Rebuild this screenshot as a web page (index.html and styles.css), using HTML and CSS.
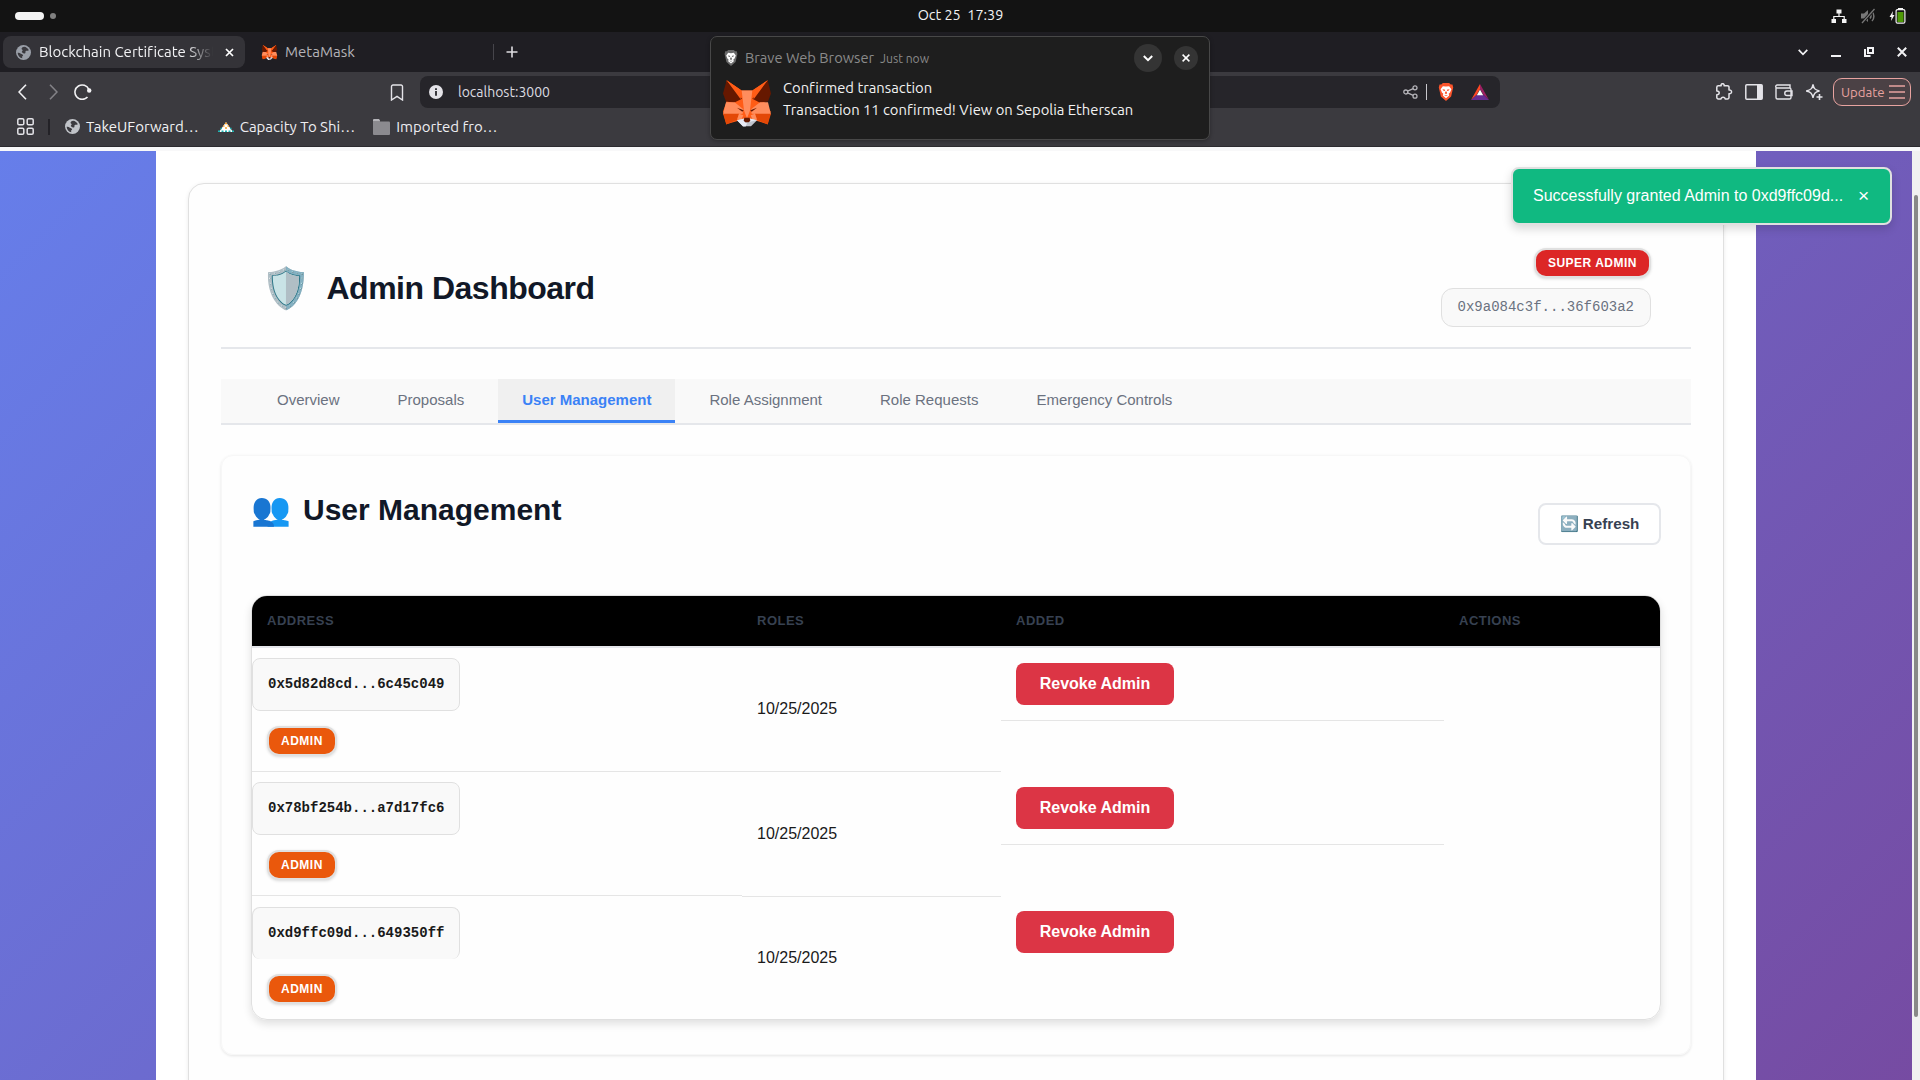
FILE: index.html
```html
<!DOCTYPE html>
<html lang="en">
<head>
<meta charset="utf-8">
<title>Blockchain Certificate System</title>
<link rel="stylesheet" href="styles.css">
</head>
<body>
<svg class="sprite" aria-hidden="true">
  <symbol id="fox" viewBox="69 150 144 140">
    <path fill="#ff5c16" d="M80 150l45 31h32l46-31-10 66 19 28-9 38-34-10-28 12-26-12-36 10-10-38 10-28z"/>
    <path fill="#661800" d="M80 150l46 56-24 12-24-4-9-24zM203 150l10 40-9 24-24 4-23-12z"/>
    <path fill="#ff5c16" d="M80 150l45 31-3 26zM203 150l-46 31 4 26z"/>
    <path fill="#ff8d5d" d="M125 181h32l-7 60-9 23-9-23zM78 216h26l26 21-2 14-59 2zM204 216h-24l-27 21 2 14 58 2z"/>
    <path fill="#e34807" d="M69 251h48l-6 18-32 14zM213 251h-48l6 18 32 14z"/>
    <path fill="#ff8d5d" d="M117 251l13 4-6 14-13 0zM165 251l-13 4 6 14h13z"/>
    <path fill="#661800" d="M111 233l20 7-4 5zM171 233l-20 7 4 5z"/>
    <path fill="#c0c4cd" d="M111 270l20-5h20l20 5-18 18h-24z"/>
    <path fill="#e7ebf6" d="M111 270l20-4 2 9 8 5-4 9h-8zM171 270l-20-4-2 9z"/>
    <path fill="#661800" d="M133 263h16l2 9-5 4h-10l-5-4z"/>
  </symbol>
  <symbol id="globe" viewBox="0 0 14 14">
    <circle cx="7" cy="7" r="7" fill="currentColor"/>
    <path class="land" d="M7.5 1.6c2 .2 3.800 1.500 4.500 3.300-1.300.8-2.200.2-3 .9-.7.700.3 1.200-.4 1.800-.9.7-2.300-.1-3-.9C5 6 6.300 5.600 6.200 4.800c-.1-.6-1.200-.6-1-1.500.2-.9 1.300-1.600 2.300-1.700zM1.500 7.200c1.300-.2 2.300.2 3 .9.6.6 1.900.5 2.100 1.300.2.900-.9 1-.9 1.700 0 .5.300.8.200 1.300C3.500 12 1.700 9.700 1.500 7.200z"/>
  </symbol>
  <symbol id="lion" viewBox="0 0 16 20">
    <path fill="currentColor" d="M4.500 0h7l1.700 1.700 2-.1L16 5l-2.300 10-5.700 5-5.700-5L0 5l.8-3.400 2 .1z"/>
    <path class="mane" fill-rule="evenodd" d="M4.500 3.500L8 4l3.500-.5L14 7l-1.500 3.500L11 12l.5 2L8 17l-3.500-3 .5-2-1.500-1.500L2 7zM4 7l1.200 1.500L7 8.800 6.600 7.300zM12 7l-2.600.3L9 8.800l1.800-.3zM7.300 9.500l-.6 2L8 12.600l1.300-1.100-.6-2zM5.800 13.200L8 14.800l2.200-1.600L8 13.600z"/>
  </symbol>
</svg>

<div class="desktop">
  <header class="panel">
    <div class="workspaces"><span class="ws-active"></span><span class="ws-dot"></span></div>
    <div class="clock">Oct 25&nbsp; 17:39</div>
    <div class="tray">
      <svg width="16" height="16" viewBox="0 0 16 16"><path fill="#f4f4f4" d="M5.500 1.500h5v4h-5zM.5 11h4.500v4H.5zM11 11h4.500v4H11z"/><path d="M8 5v3M2.800 11V8.500h10.400V11" fill="none" stroke="#f4f4f4" stroke-width="1.200"/></svg>
      <svg width="16" height="16" viewBox="0 0 16 16"><path fill="#777" d="M1 5.500h3L8 2v12l-4-3.500H1z"/><path d="M10 5.500c1.200 1.500 1.200 3.500 0 5M12 3.500c2.500 2.500 2.500 7 0 9.500" fill="none" stroke="#777" stroke-width="1.500"/><path d="M14.500 1L2 15" stroke="#131313" stroke-width="3"/><path d="M14.500 1L2 15" stroke="#777" stroke-width="1.300"/></svg>
      <svg width="17" height="16" viewBox="0 0 17 16"><path fill="#f4f4f4" d="M4 3L.5 9h2L2 13l3.500-6h-2z"/><path fill="#f4f4f4" d="M9 0h5v2H9z"/><rect x="7.100" y="1.600" width="8.800" height="13.600" rx="1.500" fill="none" stroke="#f4f4f4" stroke-width="1.200"/><path fill="#4e9a06" d="M8.500 4h6v10h-6z"/></svg>
    </div>
  </header>

  <div class="tabstrip">
    <div class="tab tab-active">
      <svg class="favicon" width="15" height="15"><use href="#globe"/></svg>
      <span class="tab-title">Blockchain Certificate Syst</span>
      <svg width="9" height="9" viewBox="0 0 9 9"><path d="M1 1l7 7M8 1L1 8" stroke="#fff" stroke-width="1.700"/></svg>
    </div>
    <div class="tab">
      <svg width="17" height="15"><use href="#fox"/></svg>
      <span class="tab-name">MetaMask</span>
    </div>
    <span class="tab-sep"></span>
    <svg class="newtab" width="12" height="12" viewBox="0 0 12 12"><path d="M6 .5v11M.5 6h11" stroke="#dedde1" stroke-width="1.600"/></svg>
    <div class="window-controls">
      <svg width="10" height="7" viewBox="0 0 10 7"><path d="M.7.9L5 5.300 9.300.9" fill="none" stroke="#f2f2f4" stroke-width="1.700"/></svg>
      <svg width="10" height="10" viewBox="0 0 10 10"><path d="M0 9h10" stroke="#f2f2f4" stroke-width="2"/></svg>
      <svg width="10" height="10" viewBox="0 0 10 10"><path d="M1 2v7h5.500M4 1h5v5H4z" fill="none" stroke="#f2f2f4" stroke-width="2"/></svg>
      <svg width="10" height="10" viewBox="0 0 10 10"><path d="M.8.8l8.400 8.400M9.200.8L.8 9.200" stroke="#f2f2f4" stroke-width="2"/></svg>
    </div>
  </div>

  <div class="toolbar">
    <div class="nav">
      <svg width="9" height="16" viewBox="0 0 9 16"><path d="M8 .8L1 8l7 7.200" fill="none" stroke="#f2f2f4" stroke-width="1.600"/></svg>
      <svg width="9" height="16" viewBox="0 0 9 16"><path d="M1 .8L8 8l-7 7.200" fill="none" stroke="#838287" stroke-width="1.600"/></svg>
      <svg width="18" height="16" viewBox="0 0 18 16"><path d="M13.500 13A7.200 7.200 0 1 1 14.800 5.400" fill="none" stroke="#f2f2f4" stroke-width="1.600"/><circle cx="15.200" cy="6.500" r="2.200" fill="#f2f2f4"/></svg>
    </div>
    <svg class="bookmark" width="14" height="17" viewBox="0 0 14 17"><path d="M1.500 2.500A1.500 1.500 0 0 1 3 1h8a1.500 1.500 0 0 1 1.500 1.500V16L7 12.300 1.500 16z" fill="none" stroke="#e4e3e8" stroke-width="1.400"/></svg>
    <div class="urlbar">
      <svg width="14" height="14" viewBox="0 0 14 14"><circle cx="7" cy="7" r="7" fill="#e4e3e8"/><path d="M6.100 6h1.800v4.800H6.100zM6.100 3.200h1.800v1.700H6.100z" fill="#26252a"/></svg>
      <span class="url">localhost:3000</span>
      <svg width="15" height="14" viewBox="0 0 15 14"><g fill="none" stroke="#b4b3b8" stroke-width="1.300"><circle cx="2.800" cy="7" r="2"/><circle cx="12" cy="2.800" r="2"/><circle cx="12" cy="11.200" r="2"/><path d="M4.600 6.200l5.600-2.600M4.600 7.800l5.600 2.600"/></g></svg>
      <span class="url-sep"></span>
      <svg class="brave" width="16" height="18"><use href="#lion"/></svg>
      <svg width="18" height="16" viewBox="0 0 18 16"><path fill="#ff4724" d="M9 0v5L5.500 11 0 16z"/><path fill="#9e1f63" d="M9 0l9 16-5.500-5L9 5z"/><path fill="#662d91" d="M0 16l5.500-5h7L18 16z"/><path fill="#fff" d="M9 5.500l3.200 5.700H5.800z"/></svg>
    </div>
    <div class="extensions">
      <svg width="18" height="18" viewBox="0 0 18 18"><path d="M3.300 2.700h2.900c-.9-2.700 3.600-2.700 2.900 0h3.400a1.500 1.500 0 0 1 1.500 1.500v2.900c3.400-.5 3.400 4.100 0 3.600v3.800a1.500 1.500 0 0 1-1.500 1.500h-2.300c-.2-2.500-4-2.500-4.200 0H3.300a1.500 1.500 0 0 1-1.500-1.500v-2.700c3.200 0 3.200-3.900 0-3.900V4.200a1.500 1.500 0 0 1 1.500-1.500z" fill="none" stroke="#e4e3e8" stroke-width="1.500" stroke-linejoin="round"/></svg>
      <svg width="18" height="16" viewBox="0 0 18 16"><rect x=".8" y=".8" width="16.400" height="14.400" rx="1" fill="none" stroke="#e4e3e8" stroke-width="1.500"/><path fill="#e4e3e8" d="M12 1h5v14h-5z"/></svg>
      <svg width="18" height="16" viewBox="0 0 18 16"><path d="M1 3v10.500A1.500 1.500 0 0 0 2.500 15h12a1.500 1.500 0 0 0 1.500-1.500v-8A1.500 1.500 0 0 0 14.500 4H2.200a1.200 1.200 0 0 1 0-3H15v3M17 7h-5a2 2 0 0 0 0 4.500h5z" fill="none" stroke="#e4e3e8" stroke-width="1.400"/></svg>
      <svg width="18" height="18" viewBox="0 0 18 18"><path d="M8 1.500c.8 4 2 5.500 6.500 6.500C10 9 8.800 10.500 8 15 7.200 10.500 6 9 1.200 8 6 7 7.200 5.500 8 1.500z" fill="none" stroke="#e4e3e8" stroke-width="1.400"/><path d="M14.500 11v6M11.500 14h6" stroke="#e4e3e8" stroke-width="1.600"/></svg>
    </div>
    <div class="update">Update
      <svg width="16" height="14" viewBox="0 0 16 14"><path d="M0 1h16M0 7h16M0 13h16" stroke="#e8a3a0" stroke-width="1.500"/></svg>
    </div>
  </div>

  <div class="bookmarks">
    <svg class="apps" width="17" height="17" viewBox="0 0 17 17"><g fill="none" stroke="#e4e3e8" stroke-width="1.500"><rect x=".8" y=".8" width="6" height="6" rx="1.300"/><rect x="10.200" y=".8" width="6" height="6" rx="1.300"/><rect x=".8" y="10.200" width="6" height="6" rx="1.300"/><rect x="10.200" y="10.200" width="6" height="6" rx="1.300"/></g></svg>
    <span class="bm-sep"></span>
    <div class="bm bm-globe"><svg width="15" height="15"><use href="#globe"/></svg>TakeUForward…</div>
    <div class="bm"><svg width="16" height="10" viewBox="0 0 16 10"><path fill="#fff" d="M8 0l7 10H1z"/><path d="M7 1.500h2M5 4h1.500M9.500 4H11M7 6h2" stroke="#f5a02a" stroke-width="1.600"/><path d="M0 9.200h2M3.500 9.200h2M7 9.200h2M10.500 9.200h2M14 9.200h2M2.500 6.500h1.500M12 6.500h1.500" stroke="#1fb5b5" stroke-width="1.500"/></svg>Capacity To Shi…</div>
    <div class="bm"><svg width="17" height="16" viewBox="0 0 17 16"><path fill="#8b8a8f" d="M0 2.500h16a1 1 0 0 1 1 1V15a1 1 0 0 1-1 1H1a1 1 0 0 1-1-1z"/><path fill="#b5b4b9" d="M0 1a1 1 0 0 1 1-1h5l1 1.500v1H0z"/></svg>Imported fro…</div>
  </div>

  <main class="viewport">
    <div class="page">
      <section class="dashboard">
        <header class="dash-header">
          <h1><span class="shield">🛡️</span>Admin Dashboard</h1>
          <div class="identity">
            <span class="badge badge-super">SUPER ADMIN</span>
            <span class="wallet">0x9a084c3f...36f603a2</span>
          </div>
        </header>
        <nav class="dash-tabs">
          <button>Overview</button>
          <button>Proposals</button>
          <button class="active">User Management</button>
          <button>Role Assignment</button>
          <button>Role Requests</button>
          <button>Emergency Controls</button>
        </nav>
        <section class="users">
          <div class="users-head">
            <h2><span class="people">👥</span>User Management</h2>
            <button class="refresh">🔄 Refresh</button>
          </div>
          <div class="table">
            <div class="row head"><span>ADDRESS</span><span>ROLES</span><span>ADDED</span><span>ACTIONS</span></div>
            <div class="row">
              <div class="cell who"><code>0x5d82d8cd...6c45c049</code><span class="badge">ADMIN</span></div>
              <div class="cell date">10/25/2025</div>
              <div class="cell act"><button class="revoke">Revoke Admin</button></div>
            </div>
            <div class="row second">
              <div class="cell who"><code>0x78bf254b...a7d17fc6</code><span class="badge">ADMIN</span></div>
              <div class="cell date">10/25/2025</div>
              <div class="cell act"><button class="revoke">Revoke Admin</button></div>
            </div>
            <div class="row last">
              <div class="cell who"><code>0xd9ffc09d...649350ff</code><span class="badge">ADMIN</span></div>
              <div class="cell date">10/25/2025</div>
              <div class="cell act"><button class="revoke">Revoke Admin</button></div>
            </div>
          </div>
        </section>
      </section>
    </div>
    <div class="scrollbar"><div class="thumb"></div></div>
    <div class="toast"><span>Successfully granted Admin to 0xd9ffc09d...</span><span class="dismiss">×</span></div>
  </main>

  <aside class="notification">
    <div class="note-head">
      <svg class="note-lion" width="14" height="16"><use href="#lion"/></svg>
      <span class="note-app">Brave Web Browser</span>
      <span class="note-time">Just now</span>
      <span class="round round-big"><svg width="10" height="7" viewBox="0 0 10 7"><path d="M.8 1L5 5.200 9.200 1" fill="none" stroke="#fff" stroke-width="2"/></svg></span>
      <span class="round"><svg width="8" height="8" viewBox="0 0 8 8"><path d="M.6.6l6.800 6.800M7.400.6L.6 7.400" stroke="#fff" stroke-width="1.500"/></svg></span>
    </div>
    <div class="note-body">
      <svg width="48" height="47"><use href="#fox"/></svg>
      <div>
        <div>Confirmed transaction</div>
        <div>Transaction 11 confirmed! View on Sepolia Etherscan</div>
      </div>
    </div>
  </aside>
</div>
</body>
</html>
```
FILE: styles.css
```css
* { box-sizing: border-box; }
body { margin: 0; overflow: hidden; font-family: Ubuntu, "Open Sans", sans-serif; font-size: 15px; }
svg { display: block; flex: none; }
button { border: 0; margin: 0; font-family: inherit; }
.sprite { position: absolute; width: 0; height: 0; }
.desktop { position: relative; width: 1920px; height: 1080px; display: flex; flex-direction: column; overflow: hidden; background: #3b3a3f; color: #eeedf1; font-variant-ligatures: none; }

/* system panel */
.panel { height: 32px; flex: none; background: #131313; display: grid; grid-template-columns: 1fr auto 1fr; align-items: center; padding: 0 14px 0 15px; }
.workspaces { display: flex; align-items: center; gap: 6px; }
.ws-active { width: 29px; height: 8px; border-radius: 4px; background: #f4f4f4; }
.ws-dot { width: 6px; height: 6px; border-radius: 50%; background: #808080; }
.clock { font-size: 14.400px; line-height: 30px; color: #f2f2f2; height: 32px; }
.tray { justify-self: end; display: flex; gap: 13px; }

/* tab strip */
.tabstrip { height: 40px; flex: none; background: #1f1e23; display: flex; align-items: center; padding: 0 13px 0 3px; }
.tab { display: flex; align-items: center; gap: 8px; height: 32px; padding: 0 12px; width: 242px; color: #b4b3b8; }
.tab-active { background: #343338; border-radius: 8px; color: #f2f2f4; padding-right: 11px; }
.favicon { color: #9a9fa8; }
.land { fill: #3b3a3f; }
.tab:nth-child(2) { margin-left: 4px; gap: 7px; }
.tab-name { padding-bottom: 2px; }
.tab-title { flex: none; width: 177px; margin-right: 1px; padding-bottom: 2px; white-space: nowrap; -webkit-mask-image: linear-gradient(90deg, #000 148px, transparent 174px); mask-image: linear-gradient(90deg, #000 148px, transparent 174px); }
.tab-active .favicon { margin-left: 1px; }
.tab-sep { width: 1px; height: 16px; background: #46454b; margin-left: 2px; }
.newtab { margin-left: 12px; }
.window-controls { margin-left: auto; display: flex; align-items: center; gap: 23px; }

/* toolbar */
.toolbar { height: 40px; flex: none; display: flex; align-items: center; padding: 0 9px 0 18px; }
.nav { display: flex; gap: 22px; align-items: center; width: 372px; }
.nav svg:last-child { margin-left: -6px; }
.bookmark { margin-right: 16px; }
.urlbar { width: 1080px; height: 32px; border-radius: 8px; background: #26252a; display: flex; align-items: center; padding: 0 11px 0 9px; font-size: 14px; }
.url { margin: 0 auto 0 15px; color: #dcdbe0; }
.url-sep { width: 1px; height: 16px; background: #c8c7cc; margin: 0 11px 0 8px; }
.brave { color: #fb542b; margin-right: 17px; }
.mane { fill: #fff; }
.extensions { margin-left: auto; display: flex; align-items: center; gap: 12px; }
.update { margin-left: 10px; height: 28px; width: 78px; border: 1.500px solid #e8a3a0; border-radius: 9px; background: #4b4145; color: #e8a3a0; font-size: 13.200px; display: flex; align-items: center; gap: 4px; padding-left: 7px; }

/* bookmarks bar */
.bookmarks { height: 35px; flex: none; display: flex; align-items: center; padding: 0 0 5px 17px; border-bottom: 1px solid #2c2b2f; }
.bm { display: flex; align-items: center; gap: 6px; margin-right: 19px; line-height: 18px; }
.bm + .bm { margin-right: 18px; }
.bm-globe { color: #f2f2f4; }
.bm-globe svg { color: #c0c3c8; }
.bm-sep { width: 2px; height: 16px; background: #232227; margin: 0 15px 0 14px; }

/* web page */
.viewport { position: relative; flex: 1; min-height: 0; overflow: hidden; border-top: 4px solid #f8f8f9; background: linear-gradient(135deg, #667eea 0%, #764ba2 100%); color: #111827; font-family: "Liberation Sans", Arial, sans-serif; font-size: 16px; font-variant-ligatures: normal; }
.page { width: 1600px; height: 1000px; margin-left: 156px; padding: 32px; background: #fff; }
.dashboard { height: 1000px; padding: 32px; background: #fefefe; border: 1px solid #e0e0e0; border-radius: 16px; box-shadow: 0 1px 4px rgba(0,0,0,.08); }
.dash-header { height: 133px; border-bottom: 2px solid #e5e7eb; display: flex; justify-content: space-between; padding: 32px 40px 0 40px; }
h1 { margin: 0; height: 80px; display: flex; align-items: center; font-size: 32px; letter-spacing: -.5px; color: #111827; }
.shield { font-size: 40px; line-height: 46px; font-weight: 400; letter-spacing: 0; width: 65.500px; }
.identity { display: flex; flex-direction: column; align-items: flex-end; gap: 10px; }
.badge { border: 2px solid #e0e0e0; background: #ea580c; border-radius: 12px; color: #fff; font-size: 12px; font-weight: 700; letter-spacing: .5px; line-height: 26px; height: 30px; padding: 0 12px; box-shadow: 0 1px 3px rgba(0,0,0,.15); }
.badge-super { background: #dc2626; }
.wallet { height: 39px; line-height: 37px; border: 1px solid #e0e0e0; border-radius: 12px; background: #f9f9f9; padding: 0 16px; font-family: "Liberation Mono", monospace; font-size: 14px; color: #6b7280; }
.dash-tabs { margin-top: 30px; height: 46px; border-bottom: 2px solid #e5e7eb; background: #f9f9f9; display: flex; gap: 10px; padding-left: 32px; }
.dash-tabs button { background: none; font-size: 15px; color: #6b7280; padding: 0 24px; border-bottom: 3px solid transparent; }
.dash-tabs .active { background: #f0f0f0; color: #3b82f6; font-weight: 700; border-color: #3b82f6; }
.users { margin-top: 30px; height: 600px; border: 1px solid #f7f7f7; border-radius: 12px; padding: 29px; box-shadow: 0 1px 3px rgba(0,0,0,.1); }
.users-head { height: 110px; display: flex; justify-content: space-between; }
h2 { margin: 7px 0 0; font-size: 30px; line-height: 36px; height: 36px; display: flex; align-items: center; }
.people { font-size: 32px; width: 52px; font-weight: 400; margin-top: -2px; }
.refresh { margin-top: 18px; height: 42px; width: 123px; border: 2px solid #e5e7eb; border-radius: 8px; background: #fff; color: #374151; font-size: 15.200px; font-weight: 700; padding: 0; }
.table { height: 425px; border: 1px solid #e0e0e0; border-radius: 16px; overflow: hidden; box-shadow: 0 4px 8px rgba(0,0,0,.12); }
.row { display: grid; grid-template-columns: 490px 259px 443px 1fr; height: 124px; }
.head { height: 52px; background: #000; border-bottom: 2px solid #e5e7eb; color: #374151; font-size: 13px; font-weight: 700; letter-spacing: .5px; line-height: 50px; }
.head span { padding-left: 15px; }
.cell { border-bottom: 1px solid #e5e5e5; }
.who { padding-top: 10px; display: flex; flex-direction: column; align-items: flex-start; }
code { height: 53px; border: 1px solid #e0e0e0; border-radius: 8px; background: #f9f9f9; padding: 0 15px; font: 700 14px/51px "Liberation Mono", monospace; color: #1a1a1a; }
.who .badge { margin: 15px 0 0 15px; }
.date { line-height: 122px; padding-left: 15px; color: #1a1a1a; }
.act { height: 73px; padding: 15px; }
.revoke { width: 158px; height: 42px; border-radius: 8px; background: #dc3545; color: #fff; font-size: 16px; font-weight: 700; padding: 0; }
.second .who { height: 124px; }
.second .date { height: 125px; line-height: 124px; }
.last .cell { border-bottom: 0; }
.last .date { line-height: 124px; }
.last .who { padding-top: 11px; }
.last code { height: 52px; border-bottom: 0; }
.scrollbar { position: absolute; top: 0; right: 0; width: 8px; height: 100%; background: #f1f1f1; padding: 44px 2px 0; }
.thumb { height: 822px; border-radius: 2px; background: #888; }
.toast { position: absolute; left: 1511px; top: 16px; width: 381px; height: 58px; border: 2px solid #e0e0e0; border-radius: 8px; background: #10b981; color: #fff; display: flex; align-items: center; gap: 15px; padding: 0 20px 0 20px; box-shadow: 0 4px 10px rgba(0,0,0,.15); }
.dismiss { font-size: 19.200px; line-height: 20px; }

/* desktop notification */
.notification { position: absolute; left: 710px; top: 36px; width: 500px; height: 104px; border: 1px solid #484848; border-radius: 7px; background: #1e1e1e; padding: 7px 11px 0 13px; font-size: 14.770px; color: #f2f2f2; box-shadow: 0 1px 4px rgba(0,0,0,.3); }
.note-head { display: flex; align-items: center; height: 28px; color: #8a8a8a; }
.note-lion { color: #6a6a6a; margin-right: 7px; }
.note-app { font-size: 14.670px; padding-bottom: 1px; }
.note-time { font-size: 12.100px; margin: 0 auto 0 6px; }
.round { width: 24px; height: 24px; border-radius: 50%; background: #343434; display: grid; place-items: center; }
.round-big { width: 28px; height: 28px; margin-right: 12px; }
.note-body { display: flex; gap: 12px; line-height: 22px; margin-top: 5px; }
.note-body svg { margin-top: 3px; margin-left: -1px; }
```
